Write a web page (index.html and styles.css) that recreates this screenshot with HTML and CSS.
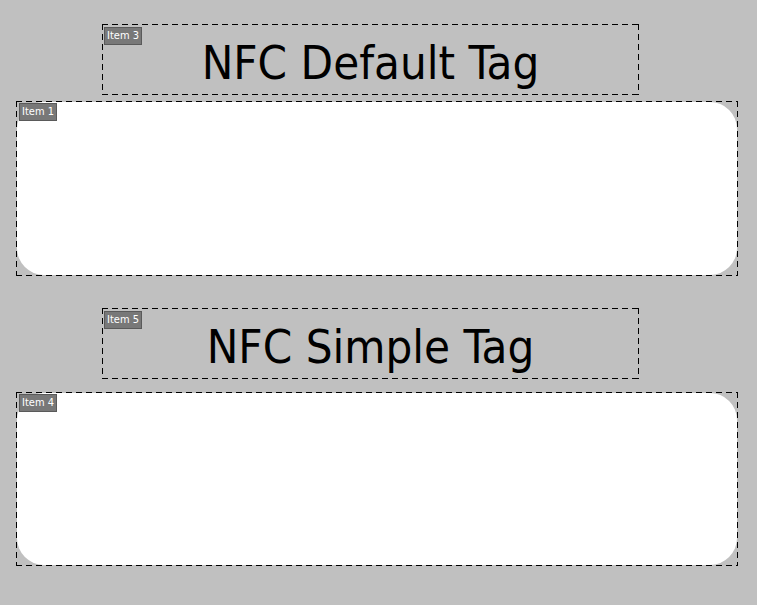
FILE: index.html
```html
<!DOCTYPE html>
<html lang="en">
<head>
    <meta charset="UTF-8">
    <title>NFC Tags</title>
    <link rel="stylesheet" href="styles.css">
</head>
<body>
    <div class="page">
        <section class="frame title-frame title-default">
            <span class="tag">Item 3</span>
            <h1 class="title">NFC Default Tag</h1>
        </section>

        <section class="frame card-frame card-default">
            <span class="tag">Item 1</span>
            <div class="card"></div>
        </section>

        <section class="frame title-frame title-simple">
            <span class="tag">Item 5</span>
            <h1 class="title">NFC Simple Tag</h1>
        </section>

        <section class="frame card-frame card-simple">
            <span class="tag">Item 4</span>
            <div class="card"></div>
        </section>
    </div>
</body>
</html>
```

FILE: styles.css
```css
body, html {
    margin: 0;
    padding: 0;
    height: 100%;
}

body {
    background-color: #c0c0c0;
    font-family: "DejaVu Sans", "Liberation Sans", sans-serif;
}

.page {
    display: flex;
    flex-direction: column;
    align-items: flex-start;
    padding: 24px 0 0 16px;
}

/* dashed outline around every item */
.frame {
    position: relative;
    box-sizing: border-box;
}

.frame::after {
    content: "";
    position: absolute;
    inset: 0;
    pointer-events: none;
    background:
        repeating-linear-gradient(90deg, #000 0 6px, transparent 6px 10px) top left / 100% 1px no-repeat,
        repeating-linear-gradient(90deg, #000 0 6px, transparent 6px 10px) bottom left / 100% 1px no-repeat,
        repeating-linear-gradient(180deg, #000 0 6px, transparent 6px 10px) top left / 1px 100% no-repeat,
        repeating-linear-gradient(180deg, #000 0 6px, transparent 6px 10px) top right / 1px 100% no-repeat;
}

/* small item label in the corner */
.tag {
    position: absolute;
    top: 2px;
    left: 2px;
    z-index: 2;
    padding: 1px 2px;
    background-color: #787878;
    border: 1px solid #5a5a5a;
    color: #ffffff;
    font-family: "DejaVu Sans Condensed", "DejaVu Sans", sans-serif;
    font-stretch: condensed;
    font-size: 11px;
    line-height: 14px;
}

.card-frame .tag {
    left: 3px;
}

.title-frame {
    margin-left: 86px;
    width: 537px;
    height: 71px;
    display: flex;
    align-items: center;
    justify-content: center;
}

.title-frame .tag {
    top: 3px;
}

.title {
    margin: 0;
    padding-top: 5px;
    font-family: "DejaVu Sans Condensed", "DejaVu Sans", sans-serif;
    font-stretch: condensed;
    font-weight: normal;
    font-size: 47px;
    line-height: 1;
    color: #000000;
}

.card-frame {
    width: 722px;
    padding: 1px;
    display: flex;
}

.card {
    flex: 1;
    background-color: #ffffff;
    border-radius: 27px;
}

.card-default {
    margin-top: 6px;
    height: 175px;
}

.title-simple {
    margin-top: 32px;
}

.card-simple {
    margin-top: 13px;
    height: 174px;
}
```
